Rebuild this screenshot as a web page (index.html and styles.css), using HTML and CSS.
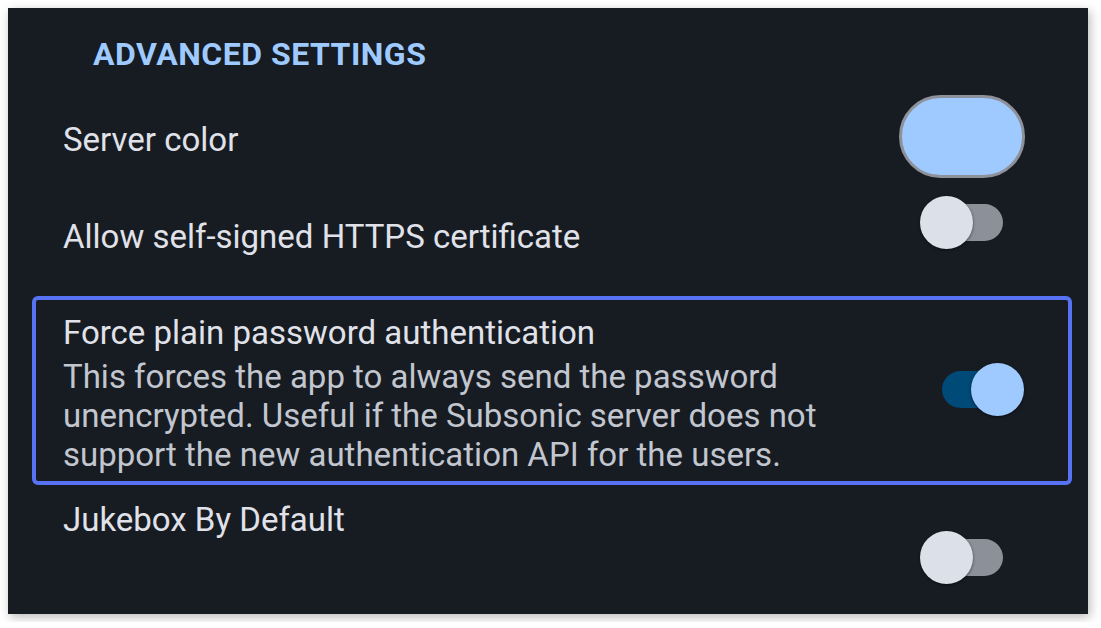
FILE: index.html
```html
<!DOCTYPE html>
<html>
<head>
	<meta charset="UTF-8">
	<title>Advanced settings</title>
	<link rel="stylesheet" href="styles.css">
</head>
<body>
	<div class="panel">
		<h2 class="section-title">ADVANCED SETTINGS</h2>

		<div class="pref pref-color">
			<div class="pref-text">
				<div class="pref-title">Server color</div>
			</div>
			<div class="color-swatch"></div>
		</div>

		<div class="pref pref-top">
			<div class="pref-text pref-text-low">
				<div class="pref-title">Allow self-signed HTTPS certificate</div>
			</div>
			<div class="switch">
				<div class="track"></div>
				<div class="thumb"></div>
			</div>
		</div>

		<div class="pref pref-focused">
			<div class="pref-text">
				<div class="pref-title">Force plain password authentication</div>
				<div class="pref-summary">This forces the app to always send the password<br>
					unencrypted. Useful if the Subsonic server does not<br>
					support the new authentication API for the users.</div>
			</div>
			<div class="switch switch-on">
				<div class="track"></div>
				<div class="thumb"></div>
			</div>
		</div>

		<div class="pref pref-top">
			<div class="pref-text">
				<div class="pref-title">Jukebox By Default</div>
			</div>
			<div class="switch switch-down">
				<div class="track"></div>
				<div class="thumb"></div>
			</div>
		</div>
	</div>
</body>
</html>
```

FILE: styles.css
```css
body {
	margin: 0;
	background-color: #ffffff;
	font-family: Roboto, "Noto Sans", sans-serif;
}

.panel {
	box-sizing: border-box;
	margin: 8px;
	width: 1080px;
	height: 606px;
	padding-top: 28px;
	background-color: #171c23;
	box-shadow: 2px 3px 10px rgba(0, 0, 0, 0.28);
}

.section-title {
	margin: 0 0 23px 85px;
	font-size: 32px;
	line-height: 36px;
	font-weight: bold;
	letter-spacing: 0.5px;
	color: #9ecaff;
}

.pref {
	display: flex;
	justify-content: space-between;
	align-items: center;
	padding: 0 64px 0 55px;
}

.pref-top {
	align-items: flex-start;
}

.pref-text {
	font-size: 33px;
	line-height: 39px;
	white-space: nowrap;
}

.pref-color .pref-text {
	padding-top: 5px;
}

.pref-text-low {
	padding-top: 21px;
}

.pref-title {
	color: #e1e2e9;
}

.pref-summary {
	margin-top: 5px;
	color: #c2c6cf;
}

.pref-color {
	margin-bottom: 18px;
}

.color-swatch {
	box-sizing: border-box;
	width: 126px;
	height: 83px;
	margin-right: -1px;
	border: 3px solid #8e9199;
	border-radius: 42px;
	background-color: #9ecaff;
}

/* focused row: keyboard focus ring */
.pref-focused {
	margin: 40px 16px 15px 24px;
	padding: 13px 44px 7px 27px;
	border: 4px solid #5872f6;
	border-radius: 6px;
}

.pref-focused .switch {
	margin-bottom: 8px;
}

.switch {
	position: relative;
	width: 104px;
	height: 53px;
	flex-shrink: 0;
}

.switch-down {
	margin-top: 31px;
}

.track {
	position: absolute;
	left: 22px;
	top: 8px;
	width: 61px;
	height: 37px;
	border-radius: 19px;
	background-color: #8c9099;
}

.thumb {
	position: absolute;
	left: 0;
	top: 0;
	width: 53px;
	height: 53px;
	border-radius: 50%;
	background-color: #dce0e9;
	box-shadow: 0 1px 3px rgba(0, 0, 0, 0.55);
}

.switch-on .track {
	background-color: #004a77;
}

.switch-on .thumb {
	left: auto;
	right: 0;
	background-color: #9ecaff;
}
```
